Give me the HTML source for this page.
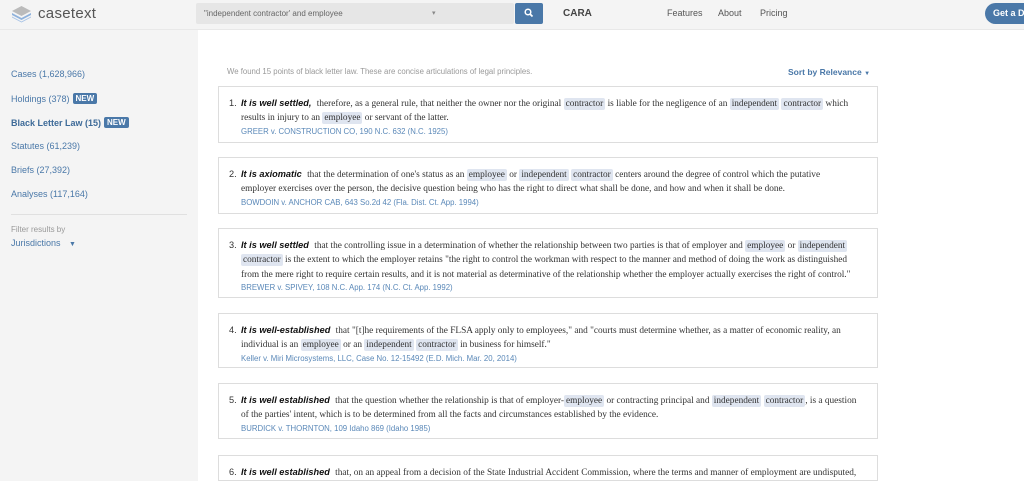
<!DOCTYPE html>
<html><head><meta charset="utf-8"><style>
*{margin:0;padding:0;box-sizing:border-box}
html,body{width:1024px;height:481px;overflow:hidden}
body{background:#fff;font-family:"Liberation Sans",sans-serif;position:relative}
.hdr{position:absolute;left:0;top:0;width:1024px;height:30px;background:#f4f4f4;border-bottom:1px solid #e8e8e8}
.side{position:absolute;left:0;top:30px;width:198px;height:451px;background:#f4f4f4}
.abs{position:absolute;white-space:nowrap}
.nav{font-size:9px;color:#4a78a8}
.new{display:inline-block;background:#4a78a8;color:#fff;font-size:8px;font-weight:bold;padding:1px 3px;border-radius:2px;margin-left:3px;vertical-align:1px}
.card{position:absolute;left:218px;width:660px;border:1px solid #ddd;background:#fff;padding:9px 20px 0 10px;overflow:hidden}
.card p{font-family:"Liberation Serif",serif;font-size:9.3px;line-height:14.3px;color:#333;padding-left:12px;position:relative}
.card p i.n{position:absolute;left:0;top:0;font-style:normal;font-family:"Liberation Sans",sans-serif;font-size:9.2px}
.card b{font-family:"Liberation Sans",sans-serif;font-style:italic;font-weight:bold;color:#111;font-size:9.2px;margin-right:3px}
.h{background:#dfe5f0;padding:1px 2px;border-radius:2px}
.cite{font-size:7.8px;color:#5a88b8;padding-left:12px;line-height:11px}
</style></head><body>
<div class="hdr"></div>
<svg class="abs" style="left:11px;top:5px" width="21" height="18" viewBox="0 0 21 18"><path d="M10.5 1 L20 6 L10.5 11 L1 6Z" fill="#bbb"/><path d="M1 8 L10.5 13 L20 8 L20 10 L10.5 15 L1 10Z" fill="#8fb2dc"/><path d="M1 11.5 L10.5 16.5 L20 11.5 L20 12.5 L10.5 17.5 L1 12.5Z" fill="#a9c4e6"/></svg>
<div class="abs" style="left:38px;top:5px;font-size:15px;color:#555;letter-spacing:0.3px">casetext</div>
<div class="abs" style="left:196px;top:3px;width:318px;height:21px;background:#e6e6e6;border-radius:2px"></div>
<div class="abs" style="left:204px;top:9px;font-size:8px;color:#666">"independent contractor' and employee</div>
<div class="abs" style="left:432px;top:9px;font-size:7px;color:#888">▾</div>
<div class="abs" style="left:515px;top:3px;width:28px;height:21px;background:#4a78a8;border-radius:2px"></div>
<svg class="abs" style="left:524px;top:8px" width="10" height="10" viewBox="0 0 10 10"><circle cx="4" cy="4" r="2.8" fill="none" stroke="#fff" stroke-width="1.5"/><path d="M6 6 L8.5 8.5" stroke="#fff" stroke-width="1.7"/></svg>
<div class="abs" style="left:563px;top:8px;font-size:10px;font-weight:bold;color:#444">CARA</div>
<div class="abs" style="left:667px;top:8px;font-size:9px;color:#555">Features</div>
<div class="abs" style="left:718px;top:8px;font-size:9px;color:#555">About</div>
<div class="abs" style="left:760px;top:8px;font-size:9px;color:#555">Pricing</div>
<div class="abs" style="left:985px;top:3px;width:60px;height:21px;background:#4a78a8;border-radius:11px;color:#fff;font-size:9px;font-weight:bold;padding:5px 0 0 8px">Get a Demo</div>
<div class="side"></div>
<div class="abs nav" style="left:11px;top:69px">Cases (1,628,966)</div>
<div class="abs nav" style="left:11px;top:93px">Holdings (378)<span class="new">NEW</span></div>
<div class="abs nav" style="left:11px;top:117px;font-weight:bold;color:#3d6a98">Black Letter Law (15)<span class="new">NEW</span></div>
<div class="abs nav" style="left:11px;top:141px">Statutes (61,239)</div>
<div class="abs nav" style="left:11px;top:165px">Briefs (27,392)</div>
<div class="abs nav" style="left:11px;top:189px">Analyses (117,164)</div>
<div class="abs" style="left:11px;top:214px;width:176px;height:1px;background:#e0e0e0"></div>
<div class="abs" style="left:11px;top:225px;font-size:8px;color:#999">Filter results by</div>
<div class="abs nav" style="left:11px;top:238px">Jurisdictions <span style="font-size:7px;margin-left:6px">▼</span></div>
<div class="abs" style="left:227px;top:67px;font-size:7.8px;color:#999">We found 15 points of black letter law. These are concise articulations of legal principles.</div>
<div class="abs" style="left:788px;top:67px;font-size:8.5px;font-weight:bold;color:#4a78a8">Sort by Relevance <span style="font-size:6px">▼</span></div>

<div class="card" style="top:86px;height:57px"><p><i class="n">1.</i><b>It is well settled,</b> therefore, as a general rule, that neither the owner nor the original <span class="h">contractor</span> is liable for the negligence of an <span class="h">independent</span> <span class="h">contractor</span> which results in injury to an <span class="h">employee</span> or servant of the latter.</p><div class="cite">GREER v. CONSTRUCTION CO, 190 N.C. 632 (N.C. 1925)</div></div>
<div class="card" style="top:157px;height:57px"><p><i class="n">2.</i><b>It is axiomatic</b> that the determination of one's status as an <span class="h">employee</span> or <span class="h">independent</span> <span class="h">contractor</span> centers around the degree of control which the putative employer exercises over the person, the decisive question being who has the right to direct what shall be done, and how and when it shall be done.</p><div class="cite">BOWDOIN v. ANCHOR CAB, 643 So.2d 42 (Fla. Dist. Ct. App. 1994)</div></div>
<div class="card" style="top:228px;height:70px"><p><i class="n">3.</i><b>It is well settled</b> that the controlling issue in a determination of whether the relationship between two parties is that of employer and <span class="h">employee</span> or <span class="h">independent</span> <span class="h">contractor</span> is the extent to which the employer retains "the right to control the workman with respect to the manner and method of doing the work as distinguished from the mere right to require certain results, and it is not material as determinative of the relationship whether the employer actually exercises the right of control."</p><div class="cite">BREWER v. SPIVEY, 108 N.C. App. 174 (N.C. Ct. App. 1992)</div></div>
<div class="card" style="top:313px;height:55px"><p><i class="n">4.</i><b>It is well-established</b> that "[t]he requirements of the FLSA apply only to employees," and "courts must determine whether, as a matter of economic reality, an individual is an <span class="h">employee</span> or an <span class="h">independent</span> <span class="h">contractor</span> in business for himself."</p><div class="cite">Keller v. Miri Microsystems, LLC, Case No. 12-15492 (E.D. Mich. Mar. 20, 2014)</div></div>
<div class="card" style="top:383px;height:56px"><p><i class="n">5.</i><b>It is well established</b> that the question whether the relationship is that of employer-<span class="h">employee</span> or contracting principal and <span class="h">independent</span> <span class="h">contractor</span>, is a question of the parties' intent, which is to be determined from all the facts and circumstances established by the evidence.</p><div class="cite">BURDICK v. THORNTON, 109 Idaho 869 (Idaho 1985)</div></div>
<div class="card" style="top:455px;height:26px"><p><i class="n">6.</i><b>It is well established</b> that, on an appeal from a decision of the State Industrial Accident Commission, where the terms and manner of employment are undisputed, the Court should determine as a matter of law whether the claimant was an <span class="h">employee</span> or an <span class="h">independent</span> <span class="h">contractor</span> and such decision is not binding.</p></div>
</body></html>
